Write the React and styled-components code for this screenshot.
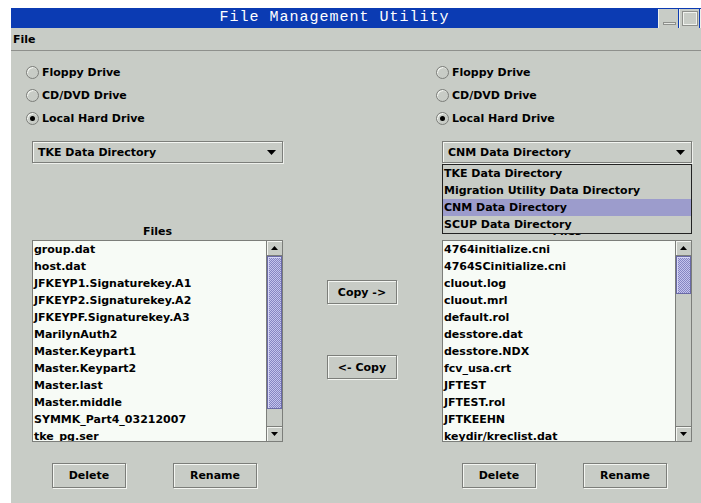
import React from 'react';
import styled, { createGlobalStyle } from 'styled-components';

const GlobalStyle = createGlobalStyle`
  html, body {
    margin: 0;
    padding: 0;
    background: #ffffff;
    overflow: hidden;
  }
`;

const GREY = '#c8ccc6';
const FONT = `"DejaVu Sans", Verdana, sans-serif`;

const Page = styled.div`
  padding: 8px 0 0 11px;
  width: 720px;
  height: 503px;
  box-sizing: border-box;
`;

const Window = styled.div`
  width: 709px;
  height: 495px;
  background: ${GREY};
  font-family: ${FONT};
  font-weight: bold;
  font-size: 11px;
  color: #000;
  display: flex;
  flex-direction: column;
`;

const TitleBar = styled.div`
  height: 20px;
  display: flex;
  align-items: stretch;
  background: #0b3bb3;
`;

const TitleText = styled.div`
  flex: 1;
  text-align: center;
  font-family: "Liberation Mono", "DejaVu Sans Mono", monospace;
  font-weight: normal;
  font-size: 15px;
  letter-spacing: 1px;
  line-height: 20px;
  color: #ffffff;
`;

const FrameButtons = styled.div`
  display: flex;
  gap: 1px;
  padding-top: 1px;
`;

const FrameButton = styled.div`
  width: 20px;
  height: 19px;
  background: ${GREY};
  border-left: 1px solid #eef0ec;
  box-sizing: border-box;
  display: flex;
  align-items: center;
  justify-content: center;
`;

const MenuBar = styled.div`
  height: 22px;
  display: flex;
  align-items: center;
  padding-left: 2px;
  border-bottom: 1px solid #8e908c;
`;

const MenuItem = styled.span`
  font-size: 11px;
  padding: 0 0 0 0;
`;

const Content = styled.div`
  display: flex;
  align-items: flex-start;
  padding: 10px 0 0 21px;
`;

const Panel = styled.div`
  width: ${p => p.$width}px;
  display: flex;
  flex-direction: column;
`;

const RadioGroup = styled.div`
  display: flex;
  flex-direction: column;
  margin-left: -6px;
`;

const RadioRow = styled.label`
  height: 23px;
  display: flex;
  align-items: center;
  gap: 3px;
`;

const RadioDot = styled.span`
  width: 13px;
  height: 13px;
  box-sizing: border-box;
  border-radius: 50%;
  border: 1px solid #7c7e7a;
  background: ${GREY};
  box-shadow: inset 1px 1px 0 #f4f6f2;
  display: flex;
  align-items: center;
  justify-content: center;

  &::after {
    content: '';
    width: 5px;
    height: 5px;
    border-radius: 50%;
    background: ${p => (p.$checked ? '#000' : 'transparent')};
  }
`;

const ComboWrap = styled.div`
  position: relative;
  margin-top: 11px;
  z-index: 2;
`;

const Combo = styled.div`
  height: 22px;
  box-sizing: border-box;
  border: 1px solid #7c7e7a;
  box-shadow: inset 1px 1px 0 #f4f6f2, 1px 1px 0 #eef0ec;
  display: flex;
  align-items: center;
  justify-content: space-between;
  padding: 0 6px 0 5px;
`;

const Popup = styled.div`
  position: absolute;
  top: 23px;
  left: 0;
  right: 0;
  border: 1px solid #222;
  background: ${GREY};
`;

const PopupItem = styled.div`
  height: 17px;
  line-height: 17px;
  padding-left: 1px;
  background: ${p => (p.$active ? '#9c9ccc' : 'transparent')};
`;

const FilesLabel = styled.div`
  margin-top: 60px;
  height: 17px;
  line-height: 17px;
  text-align: center;
`;

const ListBox = styled.div`
  height: 202px;
  box-sizing: border-box;
  border: 1px solid #7c7e7a;
  display: flex;
  background: #f7fbf6;
`;

const ListItems = styled.div`
  flex: 1;
  overflow: hidden;
  padding-left: 1px;
`;

const ListRow = styled.div`
  height: 17px;
  line-height: 17px;
  white-space: nowrap;
`;

const ScrollBar = styled.div`
  width: 15px;
  display: flex;
  flex-direction: column;
  border-left: 1px solid #7c7e7a;
  background: ${GREY};
`;

const ScrollButton = styled.div`
  height: 15px;
  box-sizing: border-box;
  border-top: ${p => (p.$down ? '1px solid #7c7e7a' : 'none')};
  border-bottom: ${p => (p.$down ? 'none' : '1px solid #7c7e7a')};
  box-shadow: inset 1px 1px 0 #f4f6f2;
  display: flex;
  align-items: center;
  justify-content: center;
`;

const Thumb = styled.div`
  height: ${p => p.$size}px;
  box-sizing: border-box;
  border: 1px solid #6a6aa6;
  background-color: #9c9cd2;
  background-image: repeating-conic-gradient(#c4c4ee 0 25%, #8686c2 0 50%);
  background-size: 2px 2px;
  box-shadow: inset 1px 1px 0 #d6d6f6;
`;

const Track = styled.div`
  flex: 1;
`;

const ButtonRow = styled.div`
  display: flex;
  gap: 47px;
  padding-left: 20px;
  margin-top: 21px;
`;

const Button = styled.div`
  height: ${p => p.$h || 25}px;
  width: ${p => p.$w}px;
  box-sizing: border-box;
  border: 1px solid #7c7e7a;
  box-shadow: inset 1px 1px 0 #f4f6f2, 1px 1px 0 #f4f6f2;
  display: flex;
  align-items: center;
  justify-content: center;
`;

const Transfer = styled.div`
  width: 70px;
  margin: 219px 45px 0 44px;
  display: flex;
  flex-direction: column;
  gap: 51px;
`;

const DownArrow = ({ w = 9, h = 5 }) => (
  <svg width={w} height={h} viewBox={`0 0 ${w} ${h}`}>
    <polygon points={`0,0 ${w},0 ${w / 2},${h}`} fill="#000" />
  </svg>
);

const UpArrow = ({ w = 7, h = 4 }) => (
  <svg width={w} height={h} viewBox={`0 0 ${w} ${h}`}>
    <polygon points={`0,${h} ${w},${h} ${w / 2},0`} fill="#000" />
  </svg>
);

const drives = ['Floppy Drive', 'CD/DVD Drive', 'Local Hard Drive'];
const directories = [
  'TKE Data Directory',
  'Migration Utility Data Directory',
  'CNM Data Directory',
  'SCUP Data Directory',
];

const leftFiles = [
  'group.dat',
  'host.dat',
  'JFKEYP1.Signaturekey.A1',
  'JFKEYP2.Signaturekey.A2',
  'JFKEYPF.Signaturekey.A3',
  'MarilynAuth2',
  'Master.Keypart1',
  'Master.Keypart2',
  'Master.last',
  'Master.middle',
  'SYMMK_Part4_03212007',
  'tke_pg.ser',
];

const rightFiles = [
  '4764initialize.cni',
  '4764SCinitialize.cni',
  'cluout.log',
  'cluout.mrl',
  'default.rol',
  'desstore.dat',
  'desstore.NDX',
  'fcv_usa.crt',
  'JFTEST',
  'JFTEST.rol',
  'JFTKEEHN',
  'keydir/kreclist.dat',
];

const FilePanel = ({ width, directory, open, files, thumb }) => (
  <Panel $width={width}>
    <RadioGroup>
      {drives.map(d => (
        <RadioRow key={d}>
          <RadioDot $checked={d === 'Local Hard Drive'} />
          {d}
        </RadioRow>
      ))}
    </RadioGroup>
    <ComboWrap>
      <Combo>
        <span>{directory}</span>
        <DownArrow />
      </Combo>
      {open && (
        <Popup>
          {directories.map(d => (
            <PopupItem key={d} $active={d === directory}>
              {d}
            </PopupItem>
          ))}
        </Popup>
      )}
    </ComboWrap>
    <FilesLabel>Files</FilesLabel>
    <ListBox>
      <ListItems>
        {files.map(f => (
          <ListRow key={f}>{f}</ListRow>
        ))}
      </ListItems>
      <ScrollBar>
        <ScrollButton>
          <UpArrow />
        </ScrollButton>
        <Thumb $size={thumb} />
        <Track />
        <ScrollButton $down>
          <DownArrow w={7} h={4} />
        </ScrollButton>
      </ScrollBar>
    </ListBox>
    <ButtonRow>
      <Button $w={74}>Delete</Button>
      <Button $w={84}>Rename</Button>
    </ButtonRow>
  </Panel>
);

export default function App() {
  return (
    <Page>
      <GlobalStyle />
      <Window>
        <TitleBar>
          <TitleText>File Management Utility</TitleText>
          <FrameButtons>
            <FrameButton>
              <svg width="16" height="16" viewBox="0 0 16 16">
                <rect x="2.5" y="11.5" width="12" height="2" fill="#e6e8e4" stroke="#8e908c" />
              </svg>
            </FrameButton>
            <FrameButton>
              <svg width="18" height="17" viewBox="0 0 18 17">
                <rect x="1.5" y="1.5" width="15" height="14" fill="none" stroke="#8e908c" />
                <rect x="2.5" y="2.5" width="13" height="12" fill="none" stroke="#f0f2ee" />
              </svg>
            </FrameButton>
            <FrameButton>
              <svg width="16" height="16" viewBox="0 0 16 16">
                <path d="M2 2 L14 14 M14 2 L2 14" stroke="#8e908c" strokeWidth="1.5" />
              </svg>
            </FrameButton>
          </FrameButtons>
        </TitleBar>
        <MenuBar>
          <MenuItem>File</MenuItem>
        </MenuBar>
        <Content>
          <FilePanel width={251} directory="TKE Data Directory" files={leftFiles} thumb={153} />
          <Transfer>
            <Button $w={70} $h={24}>Copy -&gt;</Button>
            <Button $w={70} $h={24}>&lt;- Copy</Button>
          </Transfer>
          <FilePanel width={250} directory="CNM Data Directory" open files={rightFiles} thumb={38} />
        </Content>
      </Window>
    </Page>
  );
}
